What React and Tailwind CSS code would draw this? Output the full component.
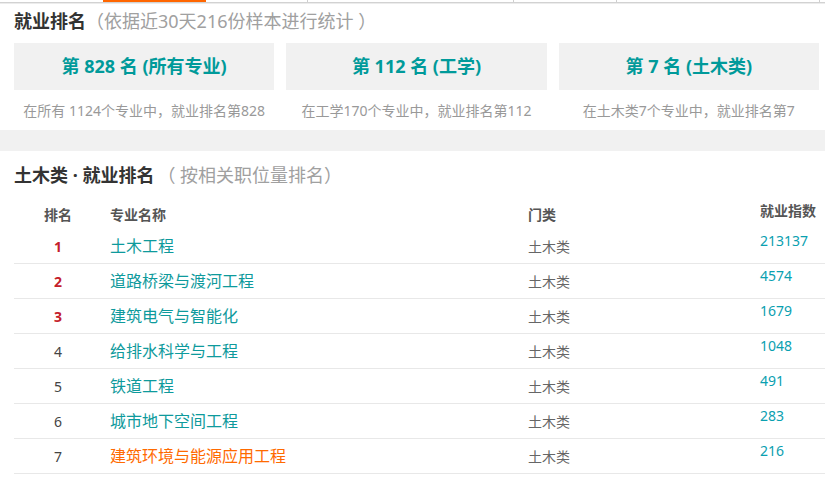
import React from 'react';

const cards = [
  { title: '第 828 名 (所有专业)', note: '在所有 1124个专业中，就业排名第828' },
  { title: '第 112 名 (工学)', note: '在工学170个专业中，就业排名第112' },
  { title: '第 7 名 (土木类)', note: '在土木类7个专业中，就业排名第7' },
];

const rows = [
  { rank: 1, name: '土木工程', cat: '土木类', index: '213137' },
  { rank: 2, name: '道路桥梁与渡河工程', cat: '土木类', index: '4574' },
  { rank: 3, name: '建筑电气与智能化', cat: '土木类', index: '1679' },
  { rank: 4, name: '给排水科学与工程', cat: '土木类', index: '1048' },
  { rank: 5, name: '铁道工程', cat: '土木类', index: '491' },
  { rank: 6, name: '城市地下空间工程', cat: '土木类', index: '283' },
  { rank: 7, name: '建筑环境与能源应用工程', cat: '土木类', index: '216', current: true },
];

const TabStrip = () => (
  <div className="relative h-[4px]">
    <div className="flex h-[2px]">
      <div className="w-[103px]" />
      <div className="w-[103px] bg-[#ff6600]" />
      <div className="w-[102px] border-r border-[#cfcfcf]" />
      <div className="w-[206px] border-r border-[#cfcfcf]" />
      <div className="w-[103px] border-r border-[#cfcfcf]" />
      <div className="w-[203px] border-r border-[#cfcfcf]" />
    </div>
    <div className="h-[1px] bg-[#d2d2d2]" />
    <div className="h-[1px] bg-[#ececec]" />
  </div>
);

export default function App() {
  return (
    <div className="w-[825px] h-[482px] overflow-hidden bg-white text-[#333] font-['Noto_Sans','Noto_Sans_CJK_SC',sans-serif]">
      <TabStrip />

      <div className="pl-[14px] pr-[6px]">
        <h2 className="h-[33px] flex items-center text-[18px] leading-[24px] whitespace-pre">
          <span className="font-bold text-[#333]">就业排名</span>
          <span className="text-[#a0a0a0]">（依据近30天216份样本进行统计 ）</span>
        </h2>

        <div className="mt-[6px] grid grid-cols-3 gap-[12px]">
          {cards.map((c) => (
            <div key={c.title}>
              <div className="h-[47px] bg-[#f1f1f1] flex items-center justify-center text-[18px] font-bold text-[#009a9a]">
                {c.title}
              </div>
              <div className="h-[40px] flex items-center justify-center text-[14px] text-[#999]">
                {c.note}
              </div>
            </div>
          ))}
        </div>
      </div>

      <div className="h-[21px] bg-[#f1f1f1]" />

      <div className="pl-[14px]">
        <h2 className="h-[48px] flex items-center text-[18px] leading-[24px] whitespace-pre">
          <span className="font-bold text-[#333]">土木类 · 就业排名</span>
          <span className="ml-[3px] text-[#a0a0a0]">（ 按相关职位量排名）</span>
        </h2>

        <div className="h-[30px] flex items-center text-[14px] font-bold text-[#555]">
          <div className="w-[88px] text-center">排名</div>
          <div className="ml-[8px] w-[418px]">专业名称</div>
          <div className="w-[232px]">门类</div>
          <div className="pb-[8px]">就业指数</div>
        </div>

        {rows.map((r) => (
          <div key={r.rank} className="h-[35px] flex items-center border-b border-[#e8e8e8]">
            <div
              className={
                r.rank <= 3
                  ? 'w-[88px] text-center text-[14px] font-bold text-[#c4202a]'
                  : 'w-[88px] text-center text-[14px] text-[#444]'
              }
            >
              {r.rank}
            </div>
            <div
              className={
                r.current
                  ? 'ml-[8px] w-[418px] text-[16px] text-[#ff6a00]'
                  : 'ml-[8px] w-[418px] text-[16px] text-[#0e9a9c]'
              }
            >
              {r.name}
            </div>
            <div className="w-[232px] text-[14px] text-[#666]">{r.cat}</div>
            <div className="pb-[12px] text-[14px] text-[#0aa0b0]">{r.index}</div>
          </div>
        ))}
      </div>
    </div>
  );
}
